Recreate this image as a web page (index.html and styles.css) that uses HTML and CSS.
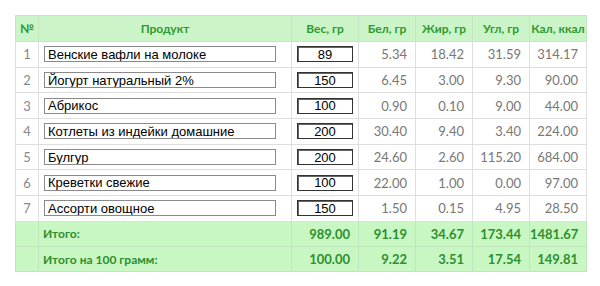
FILE: index.html
```html
<!DOCTYPE html>
<html lang="ru">
<head>
<meta charset="utf-8">
<link rel="stylesheet" href="styles.css">
</head>
<body>
<table class="calc">
  <colgroup>
    <col class="c-num"><col class="c-prod"><col class="c-w"><col class="c-v"><col class="c-v"><col class="c-v"><col class="c-v">
  </colgroup>
  <thead>
    <tr><th>№</th><th>Продукт</th><th>Вес, гр</th><th>Бел, гр</th><th>Жир, гр</th><th>Угл, гр</th><th>Кал, ккал</th></tr>
  </thead>
  <tbody>
    <tr><td class="n">1</td><td><input class="prod" value="Венские вафли на молоке"></td><td><input class="w" value="89"></td><td>5.34</td><td>18.42</td><td>31.59</td><td>314.17</td></tr>
    <tr><td class="n">2</td><td><input class="prod" value="Йогурт натуральный 2%"></td><td><input class="w" value="150"></td><td>6.45</td><td>3.00</td><td>9.30</td><td>90.00</td></tr>
    <tr><td class="n">3</td><td><input class="prod" value="Абрикос"></td><td><input class="w" value="100"></td><td>0.90</td><td>0.10</td><td>9.00</td><td>44.00</td></tr>
    <tr><td class="n">4</td><td><input class="prod" value="Котлеты из индейки домашние"></td><td><input class="w" value="200"></td><td>30.40</td><td>9.40</td><td>3.40</td><td>224.00</td></tr>
    <tr><td class="n">5</td><td><input class="prod" value="Булгур"></td><td><input class="w" value="200"></td><td>24.60</td><td>2.60</td><td>115.20</td><td>684.00</td></tr>
    <tr><td class="n">6</td><td><input class="prod" value="Креветки свежие"></td><td><input class="w" value="100"></td><td>22.00</td><td>1.00</td><td>0.00</td><td>97.00</td></tr>
    <tr><td class="n">7</td><td><input class="prod" value="Ассорти овощное"></td><td><input class="w" value="150"></td><td>1.50</td><td>0.15</td><td>4.95</td><td>28.50</td></tr>
  </tbody>
  <tfoot>
    <tr><td></td><td class="lbl">Итого:</td><td>989.00</td><td>91.19</td><td>34.67</td><td>173.44</td><td>1481.67</td></tr>
    <tr><td></td><td class="lbl">Итого на 100 грамм:</td><td>100.00</td><td>9.22</td><td>3.51</td><td>17.54</td><td>149.81</td></tr>
  </tfoot>
</table>
</body>
</html>
```
FILE: styles.css
```css
html, body {
  margin: 0;
  background: #fff;
}
body {
  padding: 15px 15px 0 15px;
}
.calc {
  border-collapse: collapse;
  width: 570px;
  table-layout: fixed;
  font-family: Lato, "Open Sans", sans-serif;
  font-size: 13px;
}
.c-num { width: 23px; }
.c-prod { width: 253px; }
.c-w { width: 67px; }
.c-v { width: 57px; }
.calc th, .calc td {
  border: 1px solid #dedede;
  height: 24.7px;
  padding: 0 8px 0 0;
  text-align: right;
  color: #777;
  white-space: nowrap;
}
.calc thead th {
  background: #cbf5c8;
  color: #2f9a2f;
  font-weight: bold;
  text-align: center;
  font-size: 12px;
  padding: 0;
  height: 25px;
  border-color: #c6e6c3;
}
.calc td.n {
  text-align: center;
  padding: 0;
  color: #888;
}
.calc tbody td:nth-child(2), .calc tbody td:nth-child(3) {
  padding: 0 5px;
}
.prod, .w {
  box-sizing: border-box;
  height: 16px;
  border: 1px solid #8a8a8a;
  font-family: "Liberation Sans", Arial, sans-serif;
  font-size: 13px;
  color: #000;
  padding: 0 3px;
  margin: 0;
  display: block;
}
.prod {
  width: 232px;
}
.w {
  width: 56px;
  text-align: center;
  border: 1px solid #333;
  box-shadow: inset 1px 1px 0 #666;
}
.calc tfoot td {
  background: #c8f7c4;
  color: #2d8f2d;
  font-weight: bold;
  border-color: #bfe6bb;
  height: 24.3px;
}
.calc tfoot td.lbl {
  text-align: left;
  padding-left: 4px;
  font-size: 12px;
}
```
